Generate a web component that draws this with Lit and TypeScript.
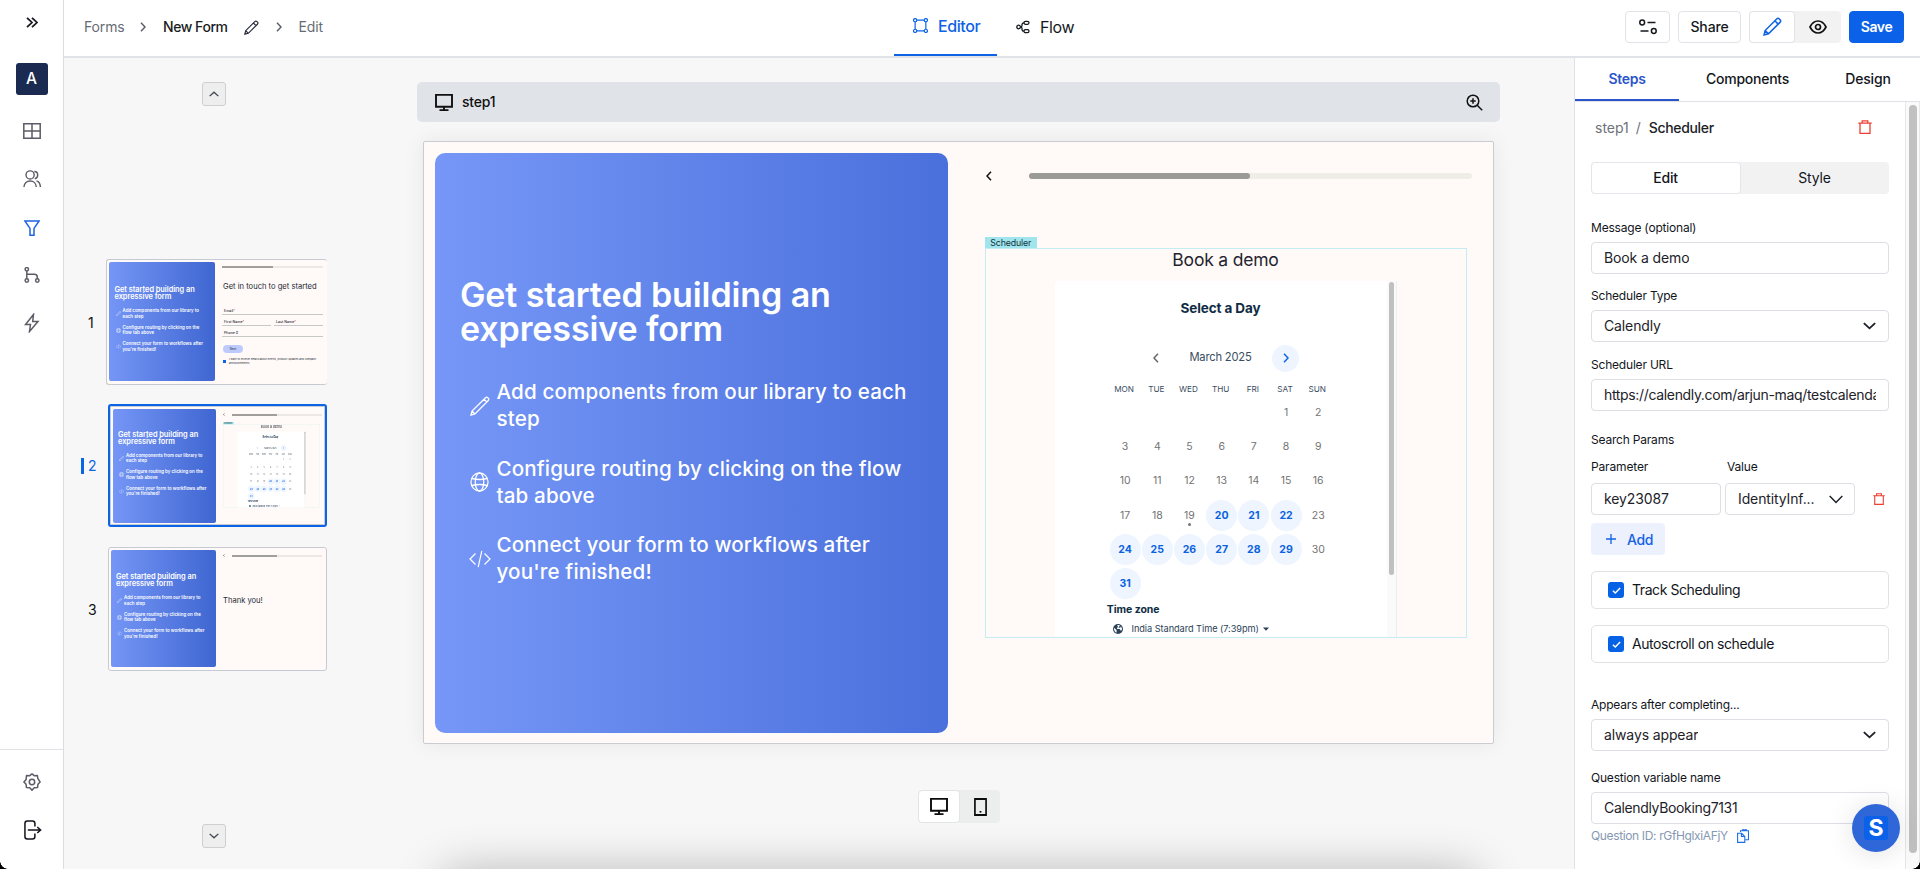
import { LitElement, html, css, svg, nothing } from "lit";
import { customElement, property } from "lit/decorators.js";
import { classMap } from "lit/directives/class-map.js";

type Shape = { box: string; body: unknown };

const stroke = (d: string, w = 1.5, extra: unknown = nothing) =>
  svg`<path d=${d} fill="none" stroke="currentColor" stroke-width=${w} />${extra}`;

const shapes: Record<string, Shape> = {
  expand: { box: "0 0 12 12", body: stroke("M1 1l5 5-5 5M6 1l5 5-5 5", 1.8) },
  grid: { box: "0 0 18 16", body: stroke("M.8.8h16.4v14.4H.8zM9 .8v14.4M.8 8h16.4", 1.5) },
  users: {
    box: "0 0 19 19",
    body: svg`<circle cx="7.5" cy="5.2" r="4.3" fill="none" stroke="currentColor" stroke-width="1.5"/>
      ${stroke("M1 18c0-4 2.8-6.3 6.5-6.3S14 14 14 18M12 1.6c2 0 3.5 1.6 3.5 3.6S14 8.900 12.400 9.300M14.300 11.500c2.500.800 4 3.200 4 6.500", 1.5)}`,
  },
  funnel: { box: "0 0 16 16", body: stroke("M.9.9h14.200L10 8.400v6.800H6V8.400z", 1.5) },
  branch: {
    box: "0 0 16 16",
    body: svg`<g fill="none" stroke="currentColor" stroke-width="1.500"><circle cx="2.800" cy="2.300" r="1.700"/><circle cx="2.800" cy="13.500" r="1.700"/><circle cx="13.300" cy="13.500" r="1.700"/><path d="M2.800 4v8M2.800 7.300h7.500q3 0 3 3v1.700"/></g>`,
  },
  bolt: { box: "0 0 16 20", body: stroke("M9.500 1.500L1.500 11.500h5l-1 7 8.500-10H8.700z", 1.5) },
  gear: {
    box: "0 0 18 18",
    body: svg`<g fill="none" stroke="currentColor" stroke-width="1.500"><circle cx="9" cy="9" r="2.700"/><path stroke-linejoin="round" d="M9 .9l2.200 1.800 3.200-.1.400 2.800L17.100 9l-2.200 2.300-.3 3.200-3.300.3L9 17.100l-2.300-2.300-3.300-.3-.3-3.200L.9 9l2.200-2.600.4-3.800 3.200.1z"/></g>`,
  },
  logout: {
    box: "0 0 19 20",
    body: svg`<g fill="none" stroke="currentColor" stroke-width="1.600"><path d="M11.500 6.500V3.500q0-2.500-2.500-2.500H3.500Q1 1 1 3.500v13Q1 19 3.500 19H9q2.500 0 2.500-2.500v-3"/><path d="M4 10h13M14 7l3.500 3-3.500 3"/></g>`,
  },
  right: { box: "0 0 6 10", body: stroke("M1 .8l4 4.200-4 4.200", 1.500) },
  left: { box: "0 0 6 10", body: stroke("M5 .8L1 5l4 4.200", 1.500) },
  pencil: {
    box: "0 0 16 16",
    body: stroke("M.9 15.100l.9-3.700L11.500 1.700q1.200-1.200 2.300 0l.5.5q1.200 1.100 0 2.300L4.600 14.200zM10 3.200l2.800 2.800M1.800 11.400l2.800 2.800", 1.3),
  },
  quill: {
    box: "0 0 20 20",
    body: stroke("M1 19l1-4L15.500 1.700q1.200-1.200 2.300 0l.5.5q1.200 1.100 0 2.300L5 18zM14 3.200l2.800 2.800M2 15l3 3", 1.3),
  },
  frame: {
    box: "0 0 14 14",
    body: svg`<g fill="none" stroke="currentColor" stroke-width="1.100"><path d="M3.500 2h7M3.500 12h7M2 3.500v7M12 3.500v7"/><circle cx="2" cy="2" r="1.500"/><circle cx="12" cy="2" r="1.500"/><circle cx="2" cy="12" r="1.500"/><circle cx="12" cy="12" r="1.500"/></g>`,
  },
  flow: {
    box: "0 0 14 14",
    body: svg`<g fill="none" stroke="currentColor" stroke-width="1.300"><circle cx="2.600" cy="7" r="1.800"/><rect x="8" y="1.300" width="5" height="3" rx="1.500"/><rect x="8" y="9.700" width="5" height="3" rx="1.500"/><path d="M4.400 7q2-.2 1.600-2.600.2-1.600 2-1.600M4.400 7q2 .2 1.600 2.600.2 1.600 2 1.600"/></g>`,
  },
  sliders: {
    box: "0 0 18 16",
    body: svg`<g fill="none" stroke="currentColor" stroke-width="1.500"><circle cx="3.200" cy="3.500" r="2.400"/><circle cx="14.800" cy="12" r="2.400"/><path d="M8.500 3.500h8M1.500 12h8"/></g>`,
  },
  eye: {
    box: "0 0 18 14",
    body: svg`<g fill="none" stroke="currentColor" stroke-width="1.700"><path d="M1 7q3-6 8-6t8 6q-3 6-8 6T1 7z"/><circle cx="9" cy="7" r="2.500"/></g>`,
  },
  trash: { box: "0 0 14 14", body: stroke("M.3 3.200h13.400M4.200 3V.8h5.600V3M2 3.400v9.900h10V3.400", 1.3) },
  down: { box: "0 0 12 8", body: stroke("M.8 1.200L6 6.400l5.200-5.200", 1.7) },
  thin: { box: "0 0 14 9", body: stroke("M.7 1L7 7.500 13.300 1", 1.5) },
  plus: { box: "0 0 10 10", body: stroke("M5 0v10M0 5h10", 1.3) },
  check: { box: "0 0 10 8", body: stroke("M1 4.200l2.700 2.600L9 1.200", 1.6) },
  copy: { box: "0 0 12 14", body: stroke("M3.500 3V1.700h8v9h-3M5.500 1.700V.7h4v1M.6 4.200h4l3.200 3.200v6H.6zM4.400 4.200v3.200h3.400", 1.1) },
  desktop: { box: "0 0 18 18", body: stroke("M1 1h16v12.500H1zM9 13.500V17M4.500 17h9", 1.9) },
  mobile: {
    box: "0 0 14 18",
    body: svg`<path d="M1 1h12v16H1z" fill="none" stroke="currentColor" stroke-width="1.800"/><path d="M6 13h2v1.600H6z" fill="currentColor"/>`,
  },
  zoom: {
    box: "0 0 17 17",
    body: svg`<g fill="none" stroke="currentColor" stroke-width="1.500"><circle cx="7" cy="7" r="5.800"/><path d="M11.200 11.200l5 5M4.300 7h5.400M7 4.300v5.400"/></g>`,
  },
  globe: {
    box: "0 0 20 20",
    body: svg`<g fill="none" stroke="currentColor" stroke-width="1.300"><circle cx="10" cy="10" r="9"/><ellipse cx="10" cy="10" rx="4.500" ry="9"/><path d="M2 6.500q8 2 16 0M2 13.500q8-2 16 0"/></g>`,
  },
  code: { box: "0 0 22 18", body: stroke("M6.500 3.500L1 9l5.500 5.500M15.500 3.500L21 9l-5.500 5.500M12.800 .8L9.200 17.200", 1.2) },
  earth: {
    box: "0 0 10 10",
    body: svg`<circle cx="5" cy="5" r="5" fill="currentColor"/><path d="M1 3.700l2.600 2.400v2.600Q.8 7.800 1 3.700zM4.200 1h2.600l-.6 1.700-2 .8L4 5h2.600l1.500 2Q9.800 4.500 8 2.200L7 4 5 3z" fill="#fff"/>`,
  },
  caret: { box: "0 0 6 4", body: svg`<path d="M0 .5h6L3 3.800z" fill="currentColor"/>` },
};

const icon = (name: string, w: number, h: number) => svg`
  <svg width=${w} height=${h} viewBox=${shapes[name].box} preserveAspectRatio="none">${shapes[name].body}</svg>`;

const reset = css`
  * { box-sizing: border-box; }
  svg { display: block; flex: none; }
`;

@customElement("day-scheduler")
class DayScheduler extends LitElement {
  static styles = [
    reset,
    css`
      :host { display: block; width: 482px; height: 401px; font-family: Inter, sans-serif; }
      .tag { width: 52.500px; height: 11px; background: #a0e5ee; color: #16323b; font-size: 8.800px; line-height: 12px; text-align: center; letter-spacing: -.15px; white-space: nowrap; }
      .frame { height: 390px; border: 1px solid #c3edf3; display: flex; flex-direction: column; overflow: hidden; }
      .message { text-align: center; font-size: 17.500px; line-height: 22px; height: 31px; flex: none; color: #1f2430; letter-spacing: -.2px; }
      .embed { flex: 1; display: flex; margin: 1px 0 0 69.500px; width: 342px; }
      .sheet { width: 332px; background: #fff; padding: 18px 52px 0 51px; color: #0f2c44; border-radius: 3px 0 0 0; }
      .track { width: 10px; background: #fafafa; border-right: 1px solid #eee; padding: 1px 2px 0; }
      .thumb { height: 293px; border-radius: 3px; background: #c0c0c0; }
      .pick { text-align: center; font-weight: 700; font-size: 13.500px; line-height: 18px; letter-spacing: -.1px; }
      .month { display: flex; justify-content: center; align-items: center; height: 28px; margin: 27px 0 0; font-size: 11.200px; letter-spacing: -.2px; color: #3a4d61; }
      .month span { width: 103px; text-align: center; line-height: 14px; padding-bottom: 2px; }
      .nav { width: 27px; height: 27px; border-radius: 50%; display: flex; align-items: center; justify-content: center; color: #666; }
      .next { background: #eef5ff; color: #0a63e8; }
      .week { display: grid; grid-template-columns: repeat(7, 32.200px); width: 226px; margin: 0 0 0 2px; text-align: center; }
      .names { font-size: 8.200px; line-height: 12px; margin-top: 11px; color: #3a4d61; }
      .day { height: 34.300px; display: flex; align-items: center; justify-content: center; font-size: 10.500px; color: #737373; }
      .days { margin: 0 0 0 3px; }
      .disc { width: 31px; height: 31px; border-radius: 50%; display: flex; align-items: center; justify-content: center; position: relative; }
      .open { background: #eef5ff; color: #0a62e0; font-weight: 700; }
      .today::after { content: ""; position: absolute; left: 14px; bottom: 5px; width: 3px; height: 3px; border-radius: 50%; background: #777; }
      .zone { font-size: 10.500px; font-weight: 700; line-height: 14px; margin: 2px 0 0 .8px; letter-spacing: -.05px; }
      .place { display: flex; align-items: center; font-size: 9.200px; line-height: 12px; margin: 6px 0 0 7px; color: #2b4157; white-space: nowrap; }
      .place span { margin: 0 4px 0 8.500px; letter-spacing: -.05px; }
    `,
  ];

  render() {
    const cells = [0, 0, 0, 0, 0, ...Array.from({ length: 31 }, (_, i) => i + 1)];
    const isOpen = (n: number) => n >= 20 && n !== 23 && n !== 30;
    return html`
      <div class="tag">Scheduler</div>
      <div class="frame">
        <div class="message">Book a demo</div>
        <div class="embed">
          <div class="sheet">
            <div class="pick">Select a Day</div>
            <div class="month">
              <div class="nav">${icon("left", 6, 10)}</div>
              <span>March 2025</span>
              <div class="nav next">${icon("right", 6, 10)}</div>
            </div>
            <div class="week names">${["MON", "TUE", "WED", "THU", "FRI", "SAT", "SUN"].map((d) => html`<div>${d}</div>`)}</div>
            <div class="week days">
              ${cells.map((n) => html`<div class="day">${n ? html`<div class=${classMap({ disc: true, open: isOpen(n), today: n === 19 })}>${n}</div>` : nothing}</div>`)}
            </div>
            <div class="zone">Time zone</div>
            <div class="place">${icon("earth", 10, 10)}<span>India Standard Time (7:39pm)</span>${icon("caret", 6, 4)}</div>
          </div>
          <div class="track"><div class="thumb"></div></div>
        </div>
      </div>
    `;
  }
}

@customElement("step-thumb")
class StepThumb extends LitElement {
  @property({ type: Number }) step = 1;

  static styles = [
    reset,
    css`
      :host { display: block; font-family: Inter, sans-serif; }
      .card { display: flex; background: #fffaf7; border: 1px solid #c6cad2; border-radius: 3px; overflow: hidden; }
      .one { width: 221px; height: 126px; border-right: 0; padding: 2px 0 3px 2px; }
      .two { width: 219px; height: 123px; border: 2px solid #0b63e5; border-radius: 3px; box-shadow: inset 0 0 0 1px #c6cad2; padding: 3px 0 2px 3px; }
      .three { width: 219px; height: 124px; padding: 2px 0 3px 2px; }
      .blue { border-radius: 2px; background: linear-gradient(90deg, #7596f6, #3f66d1); color: #fff; flex: none; }
      .one .blue { width: 106px; padding: 24px 0 0 5.500px; }
      .two .blue { width: 103px; padding: 21.500px 0 0 5px; }
      .three .blue { width: 105px; padding: 23px 0 0 5px; }
      .title { font-size: 7.400px; font-weight: 600; line-height: 7px; letter-spacing: -.04px; white-space: nowrap; }
      ul { margin: 8px 0 0 1px; padding: 0; list-style: none; display: grid; gap: 5px; }
      li { display: flex; align-items: center; gap: 2px; font-size: 4.400px; font-weight: 600; line-height: 5.800px; letter-spacing: .03px; white-space: nowrap; }
      .side { flex: 1; min-width: 0; color: #222936; }
      .bar { height: 2px; background: #ece8e3; }
      .bar i { display: block; width: 50%; height: 100%; background: #a09f9c; }
      .nav { display: flex; align-items: center; gap: 7px; }
      .nav .bar { width: 90px; }
      .one .side { padding: 4px 4px 0 7px; }
      .head { font-size: 7.600px; line-height: 10px; white-space: nowrap; }
      .one .head { margin: 14px 0 12px 1px; }
      .row { display: flex; gap: 3px; }
      .field { flex: 1; border-bottom: 1px solid #c5cac9; height: 11px; font-size: 3.600px; line-height: 15px; font-weight: 500; padding-left: 2px; }
      .field b { color: #e65454; font-weight: 400; }
      .next { width: 20px; height: 8px; border-radius: 4px; background: #bccbfb; font-size: 3px; line-height: 8px; text-align: center; margin: 8px 0 5px 1px; }
      .agree { display: flex; align-items: center; gap: 3px; font-size: 2.700px; line-height: 3.800px; white-space: nowrap; margin-left: 1px; }
      .box { width: 3px; height: 3px; background: #0b63e5; }
      .two .side { padding: 4px 0 0 7px; }
      .three .side { padding: 4px 0 0 7px; }
      .three .head { margin-top: 39px; }
      .shrink { width: 97px; height: 86px; margin-top: 6px; }
      .shrink day-scheduler { transform: scale(.201, .214); transform-origin: 0 0; }
    `,
  ];

  private aside() {
    const items: [string, string, string][] = [
      ["quill", "Add components from our library to", "each step"],
      ["globe", "Configure routing by clicking on the", "flow tab above"],
      ["code", "Connect your form to workflows after", "you're finished!"],
    ];
    return html`<div class="blue">
      <div class="title">Get started building an<br />expressive form</div>
      <ul>${items.map(([i, a, b]) => html`<li>${icon(i, 5, 5)}<span>${a}<br />${b}</span></li>`)}</ul>
    </div>`;
  }

  render() {
    const bar = html`<div class="bar"><i></i></div>`;
    if (this.step === 1)
      return html`<div class="card one">${this.aside()}
        <div class="side">
          ${bar}
          <div class="head">Get in touch to get started</div>
          <div class="field">Email<b>*</b></div>
          <div class="row"><div class="field">First Name<b>*</b></div><div class="field">Last Name<b>*</b></div></div>
          <div class="field">Phone #</div>
          <div class="next">Next</div>
          <div class="agree"><div class="box"></div><span>I want to receive emails about events, product updates and company<br />announcements</span></div>
        </div>
      </div>`;
    if (this.step === 2)
      return html`<div class="card two">${this.aside()}
        <div class="side">
          <div class="nav">${icon("left", 2, 3)}${bar}</div>
          <div class="shrink"><day-scheduler></day-scheduler></div>
        </div>
      </div>`;
    return html`<div class="card three">${this.aside()}
      <div class="side">
        <div class="nav">${icon("left", 2, 3)}${bar}</div>
        <div class="head">Thank you!</div>
      </div>
    </div>`;
  }
}

@customElement("side-nav")
class SideNav extends LitElement {
  static styles = [
    reset,
    css`
      :host { display: flex; flex-direction: column; width: 64px; height: 869px; background: #fff; border-right: 1px solid #d9dee3; color: #5d5b66; font-family: Inter, sans-serif; }
      .slot { height: 48px; display: flex; align-items: center; justify-content: center; }
      .top { height: 45px; color: #16181d; }
      .avatar { width: 32px; height: 32px; margin: 18px 0 4px 16px; border-radius: 3px; background: #1a2a50; color: #fff; font-weight: 500; font-size: 15.500px; display: flex; align-items: center; justify-content: center; padding: 0 1px 1px 0; }
      .h64 { height: 64px; }
      .h32 { height: 32px; }
      .h66 { height: 66px; }
      .h28 { height: 28px; }
      .h67 { height: 67px; }
      .on { color: #1e62e0; }
      .foot { margin-top: auto; height: 120px; border-top: 1px solid #dfe1e4; padding-top: 8px; }
      .dark { color: #14141f; }
      .slot.two { padding-left: 3px; }
    `,
  ];
  render() {
    return html`
      <div class="slot top">${icon("expand", 12, 11)}</div>
      <div class="avatar">A</div>
      <div class="slot h64">${icon("grid", 18, 16)}</div>
      <div class="slot h32">${icon("users", 18, 18)}</div>
      <div class="slot h66 on">${icon("funnel", 16, 16)}</div>
      <div class="slot h28">${icon("branch", 16, 16)}</div>
      <div class="slot h67">${icon("bolt", 16, 20)}</div>
      <div class="foot">
        <div class="slot">${icon("gear", 18, 18)}</div>
        <div class="slot dark two">${icon("logout", 18, 20)}</div>
      </div>
    `;
  }
}

@customElement("step-panel")
class StepPanel extends LitElement {
  static styles = [
    reset,
    css`
      :host { display: flex; flex-direction: column; width: 346px; height: 811px; background: #fff; border-left: 1px solid #dfe2e6; font-family: Inter, sans-serif; font-size: 14px; color: #12161c; }
      .tabs { height: 44px; flex: none; display: flex; border-bottom: 1px solid #dfe2e6; font-weight: 500; }
      .tab { display: flex; align-items: center; justify-content: center; padding-bottom: 2px; }
      .tab:nth-child(1) { width: 104px; color: #2b55cb; font-weight: 600; border-bottom: 2px solid #2b55cb; padding: 0; letter-spacing: -.3px; }
      .tab:nth-child(2) { width: 137px; letter-spacing: -.25px; }
      .tab:nth-child(3) { width: 104px; letter-spacing: -.2px; }
      .body { flex: 1; display: flex; min-height: 0; }
      .form { width: 331px; padding: 9px 16px 0; border-right: 1px solid #e4e6e9; display: flex; flex-direction: column; }
      .crumbs { height: 32px; display: flex; align-items: center; padding: 0 17px 0 4px; color: #6d7278; }
      .crumbs b { font-weight: 500; color: #1c2126; margin-left: 8px; letter-spacing: -.35px; }
      .crumbs i { font-style: normal; margin-left: 7px; }
      .crumbs svg { margin-left: auto; color: #ee3f33; }
      .switch { height: 32px; margin-top: 19px; display: flex; border-radius: 4px; background: #f2f2f2; letter-spacing: -.2px; }
      .switch div { flex: 1; display: flex; align-items: center; justify-content: center; border-radius: 4px; padding: 0 1px 1px 0; }
      .switch .sel { background: #fff; border: 1px solid #e3e6ea; font-weight: 500; }
      .label { height: 16px; font-size: 12px; line-height: 16px; letter-spacing: -.2px; margin-bottom: 6px; flex: none; }
      .input { height: 32px; flex: none; border: 1px solid #dcdfe3; border-radius: 4px; padding: 0 12px; display: flex; align-items: center; justify-content: space-between; white-space: nowrap; color: #1d2229; letter-spacing: -.12px; }
      .input.tight { letter-spacing: -.34px; }
      .input span { overflow: hidden; line-height: 22px; }
      .pair { display: flex; align-items: center; gap: 4px; }
      .pair .input { width: 130px; padding-right: 11px; }
      .pair > svg { margin-left: 14px; color: #ee3f33; }
      .names { display: flex; margin: 11px 0 8px; font-size: 12px; line-height: 16px; letter-spacing: -.15px; }
      .names div:first-child { width: 136px; }
      .add { width: 74px; height: 32px; margin: 8px 0 16px; border-radius: 4px; background: #ecf1fd; color: #1162e6; font-weight: 500; letter-spacing: -.3px; display: flex; align-items: center; gap: 11px; padding: 0 0 0 15px; flex: none; }
      .toggle { height: 38px; flex: none; border: 1px solid #e0e2e6; border-radius: 5px; display: flex; align-items: center; gap: 8px; padding-left: 16px; margin-bottom: 16px; letter-spacing: -.42px; }
      .toggle span { padding-bottom: 1px; }
      .box { width: 16px; height: 16px; border-radius: 3px; background: #0562e5; color: #fff; display: flex; align-items: center; justify-content: center; }
      .id { display: flex; align-items: center; gap: 9px; height: 16px; margin-top: 3px; font-size: 12px; letter-spacing: -.36px; color: #8698b3; }
      .id svg { color: #1d6fe9; margin-top: 1px; }
      .m15 { margin-top: 15px; } .m14 { margin-top: 14px; } .m26 { margin-top: 26px; } .m21 { margin-top: 21px; margin-bottom: 0; } .m18 { margin-top: 18px; } .m19 { margin-top: 19px; }
      .track { flex: 1; background: #fafafa; border-right: 1px solid #e8e8e8; padding: 3px 2px 0 3px; }
      .thumb { height: 748px; border-radius: 4px; background: #c1c1c1; }
    `,
  ];
  render() {
    const check = (t: string) => html`<div class="toggle"><div class="box">${icon("check", 9, 7)}</div><span>${t}</span></div>`;
    return html`
      <div class="tabs"><div class="tab">Steps</div><div class="tab">Components</div><div class="tab">Design</div></div>
      <div class="body">
        <div class="form">
          <div class="crumbs">step1<i>/</i><b>Scheduler</b>${icon("trash", 14, 14)}</div>
          <div class="switch"><div class="sel">Edit</div><div>Style</div></div>
          <div class="label m26">Message (optional)</div>
          <div class="input"><span>Book a demo</span></div>
          <div class="label m14">Scheduler Type</div>
          <div class="input"><span>Calendly</span>${icon("down", 13, 8)}</div>
          <div class="label m15">Scheduler URL</div>
          <div class="input tight"><span>https://calendly.com/arjun-maq/testcalendar</span></div>
          <div class="label m21">Search Params</div>
          <div class="names"><div>Parameter</div><div>Value</div></div>
          <div class="pair">
            <div class="input"><span>key23087</span></div>
            <div class="input"><span>IdentityInf...</span>${icon("thin", 14, 9)}</div>
            ${icon("trash", 12, 12)}
          </div>
          <div class="add">${icon("plus", 10, 10)}Add</div>
          ${check("Track Scheduling")}${check("Autoscroll on schedule")}
          <div class="label m18">Appears after completing...</div>
          <div class="input"><span>always appear</span>${icon("down", 13, 8)}</div>
          <div class="label m19">Question variable name</div>
          <div class="input tight"><span>CalendlyBooking7131</span></div>
          <div class="id">Question ID: rGfHglxiAFjY${icon("copy", 12, 14)}</div>
        </div>
        <div class="track"><div class="thumb"></div></div>
      </div>
    `;
  }
}

@customElement("app-root")
class AppRoot extends LitElement {
  static styles = [
    reset,
    css`
      :host { display: grid; grid-template-columns: 64px 1fr; width: 1920px; height: 869px; overflow: hidden; position: relative; background: #f7f7f8; font-family: Inter, sans-serif; font-size: 14px; color: #15191e; }
      .main { display: flex; flex-direction: column; min-width: 0; }
      header { height: 58px; flex: none; background: #fff; border-bottom: 2px solid #e0e4e8; display: flex; padding-right: 16px; }
      .crumbs { width: 830px; display: flex; align-items: center; padding: 0 0 3px 20px; color: #676c73; letter-spacing: -.15px; }
      .crumbs svg { color: #5b6068; margin-top: 1px; }
      .crumbs b { font-weight: 500; color: #191d22; letter-spacing: -.45px; margin: 0 16px 0 17px; }
      .crumbs .first { width: 56px; }
      .crumbs .pen { width: 32px; }
      .crumbs .pen svg { color: #2a2e3c; }
      .crumbs .last { margin-left: 17px; }
      .tab { display: flex; align-items: center; gap: 10px; font-size: 16px; padding: 0 0 3px 19px; }
      .tab.on { width: 103px; color: #0d63e6; font-weight: 500; border-bottom: 2px solid #0d63e6; letter-spacing: -.4px; padding-bottom: 3px; }
      .tab.off { letter-spacing: -.4px; padding-bottom: 12px; padding-top: 9px; }
      .tools { margin-left: auto; display: flex; align-items: center; gap: 8px; padding-bottom: 2px; }
      .btn { height: 32px; border: 1px solid #e0e3e7; border-radius: 4px; display: flex; align-items: center; justify-content: center; font-weight: 500; background: #fff; padding-bottom: 1px; letter-spacing: -.15px; }
      .w45 { width: 45px; }
      .w63 { width: 63px; }
      .pair { display: flex; width: 92px; background: #f2f2f2; border-radius: 4px; }
      .pair > div { width: 46px; }
      .eye { display: flex; align-items: center; justify-content: center; color: #111; }
      .blue { color: #0d63e6; }
      .save { width: 55px; background: #0b62e8; border-color: #0b62e8; color: #fff; font-weight: 600; letter-spacing: -.4px; }
      .body { flex: 1; display: flex; min-height: 0; }
      .rail { width: 353px; padding: 24px 0 21px; display: flex; flex-direction: column; }
      .arrow { width: 24px; height: 24px; margin-left: 138px; border: 1px solid #cdcfd1; border-radius: 3px; background: #eee; display: flex; align-items: center; justify-content: center; color: #464b53; }
      .flip { transform: rotate(180deg); }
      .steps { flex: 1; padding-top: 153px; }
      .step { display: flex; align-items: center; font-size: 14px; color: #111; }
      .step .num { width: 42px; padding-left: 24px; }
      .step:nth-child(n + 2) .num { width: 44px; }
      .step.on .num { color: #0b63e5; padding-left: 17px; display: flex; gap: 5px; align-items: center; }
      .step.on .num i { width: 3px; height: 16px; background: #0b63e5; margin-right: -1px; }
      .step:nth-child(2) { margin: 19px 0 20px; }
      .center { width: 1083px; padding-top: 24px; display: flex; flex-direction: column; align-items: flex-start; }
      .bar { width: 1083px; height: 40px; background: #e0e3e8; border-radius: 5px; display: flex; align-items: center; padding: 0 17px 0 18px; font-weight: 500; color: #111; }
      .bar span { margin-left: 9px; letter-spacing: -.2px; padding-bottom: 1px; }
      .bar svg:last-child { margin-left: auto; }
      .card { width: 1071px; height: 603px; margin: 19px 0 0 6px; background: #fffaf7; border: 1px solid #c9ccd2; border-radius: 2px; box-shadow: 0 0 22px rgba(0, 0, 0, .07); display: flex; padding: 11px 0 0 10.500px; }
      .hero { width: 513px; height: 580px; border-radius: 10px; background: linear-gradient(90deg, #7697f7, #4a70dc); color: #fff; padding: 125px 20px 0 25.500px; flex: none; }
      h1 { margin: 0; font-size: 34px; line-height: 34px; font-weight: 600; letter-spacing: -.1px; }
      ul { margin: 32px 0 0 8.500px; padding: 0; list-style: none; display: grid; gap: 21.700px; }
      li { display: grid; grid-template-columns: 22px 1fr; gap: 6px; align-items: center; font-size: 20.600px; line-height: 27.400px; font-weight: 500; letter-spacing: .14px; white-space: nowrap; }
      li svg { justify-self: center; margin-top: 1px; }
      .preview { flex: 1; padding: 17px 0 0 37px; }
      .progress { display: flex; align-items: center; gap: 37px; height: 11px; color: #111; margin-left: 1px; }
      .rule { width: 443px; height: 6px; border-radius: 3px; background: #f0ece6; }
      .rule i { display: block; width: 50%; height: 6px; border-radius: 3px; background: #9a9a97; }
      .preview day-scheduler { margin-top: 56px; }
      .devices { display: flex; width: 82px; height: 33px; margin: 46px 0 0 501px; border-radius: 4px; background: #eceeed; color: #0c0c0c; }
      .devices div { flex: 1; display: flex; align-items: center; justify-content: center; }
      .devices .sel { background: #fff; border: 1px solid #e2e5e8; border-radius: 4px; }
      step-panel { margin-left: auto; }
      .glow { position: absolute; left: 444px; top: 876px; width: 1032px; height: 40px; box-shadow: 0 0 50px rgba(0, 0, 0, .33); }
      .chat { position: absolute; left: 1852px; top: 804px; width: 48px; height: 48px; border-radius: 50%; background: #2f66d8; display: flex; align-items: center; justify-content: center; box-shadow: 0 2px 28px rgba(0, 0, 0, .12); }
      .chat b { width: 24px; height: 24px; border-radius: 3px; background: #0b62e8; color: #fff; font-size: 23px; line-height: 25px; text-align: center; font-weight: 700; }
      .corner { position: absolute; bottom: 0; width: 8px; height: 8px; }
      .bl { left: 0; background: radial-gradient(circle at 100% 0, transparent 7.500px, #000 8px); }
      .br { right: 0; background: radial-gradient(circle at 0 0, transparent 7.500px, #000 8px); }
    `,
  ];

  render() {
    const points: [unknown, string, string][] = [
      [icon("quill", 20, 20), "Add components from our library to each", "step"],
      [icon("globe", 19, 20), "Configure routing by clicking on the flow", "tab above"],
      [icon("code", 22, 18), "Connect your form to workflows after", "you're finished!"],
    ];
    return html`
      <side-nav></side-nav>
      <div class="main">
        <header>
          <div class="crumbs">
            <span class="first">Forms</span>${icon("right", 6, 10)}<b>New Form</b>
            <span class="pen">${icon("pencil", 15, 15)}</span>${icon("right", 6, 10)}
            <span class="last">Edit</span>
          </div>
          <div class="tab on">${icon("frame", 15, 15)}Editor</div>
          <div class="tab off">${icon("flow", 14, 14)}Flow</div>
          <div class="tools">
            <div class="btn w45">${icon("sliders", 18, 16)}</div>
            <div class="btn w63">Share</div>
            <div class="pair"><div class="btn blue">${icon("pencil", 19, 19)}</div><div class="eye">${icon("eye", 18, 14)}</div></div>
            <div class="btn save">Save</div>
          </div>
        </header>
        <div class="body">
          <div class="rail">
            <div class="arrow flip">${icon("down", 10, 6)}</div>
            <div class="steps">
              <div class="step"><div class="num">1</div><step-thumb .step=${1}></step-thumb></div>
              <div class="step on"><div class="num"><i></i>2</div><step-thumb .step=${2}></step-thumb></div>
              <div class="step"><div class="num">3</div><step-thumb .step=${3}></step-thumb></div>
            </div>
            <div class="arrow">${icon("down", 10, 6)}</div>
          </div>
          <div class="center">
            <div class="bar">${icon("desktop", 18, 17)}<span>step1</span>${icon("zoom", 17, 17)}</div>
            <div class="card">
              <div class="hero">
                <h1>Get started building an<br />expressive form</h1>
                <ul>${points.map(([i, a, b]) => html`<li>${i}<span>${a}<br />${b}</span></li>`)}</ul>
              </div>
              <div class="preview">
                <div class="progress">${icon("left", 6, 10)}<div class="rule"><i></i></div></div>
                <day-scheduler></day-scheduler>
              </div>
            </div>
            <div class="devices"><div class="sel">${icon("desktop", 18, 17)}</div><div>${icon("mobile", 13, 18)}</div></div>
          </div>
          <step-panel></step-panel>
        </div>
      </div>
      <div class="glow"></div>
      <div class="chat"><b>S</b></div>
      <div class="corner bl"></div>
      <div class="corner br"></div>
    `;
  }
}
